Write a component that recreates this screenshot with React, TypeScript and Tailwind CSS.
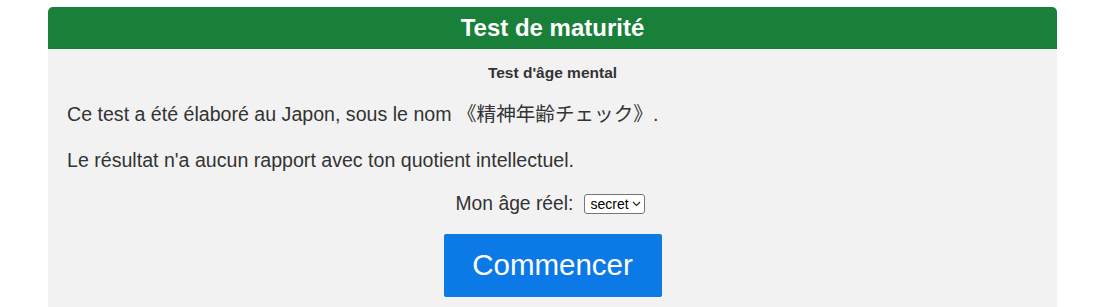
import React from "react";

export default function App() {
  return (
    <div className="w-[1100px] h-[307px] bg-white overflow-hidden pt-[7px]" style={{ fontFamily: '"Liberation Sans", Arial, "Noto Sans CJK JP", sans-serif' }}>
      <div className="ml-[48px] w-[1009px]">
        <div className="h-[42px] bg-[#19803a] rounded-t-[5px] flex items-center justify-center">
          <h1 className="text-white font-bold text-[24px] leading-[28px]">Test de maturité</h1>
        </div>
        <div className="bg-[#f2f2f2] h-[260px] pt-[14px] px-[20px] text-[#333]">
          <div className="text-center font-bold text-[15.5px] leading-[20px]">Test d'âge mental</div>
          <p className="text-[19.6px] leading-[22px] mt-[20px] -ml-[1px]">Ce test a été élaboré au Japon, sous le nom 《精神年齢チェック》.</p>
          <p className="text-[19.6px] leading-[22px] mt-[24px] -ml-[1px]">Le résultat n'a aucun rapport avec ton quotient intellectuel.</p>
          <div className="flex items-center justify-center gap-[11px] mt-[22px] text-[19.3px] leading-[22px] pr-[4px]">
            <span>Mon âge réel:</span>
            <div className="relative">
              <select className="appearance-none block text-[14px] leading-[17px] h-[20px] w-[61px] border border-[#767676] rounded-[3px] bg-white text-black pl-[5px] pr-[14px]" defaultValue="secret">
                <option>secret</option>
              </select>
              <svg className="absolute right-[4px] top-[7px] pointer-events-none" width="9" height="6" viewBox="0 0 9 6" fill="none">
                <path d="M1 1l3.5 3.5L8 1" stroke="#222" strokeWidth="1.1" />
              </svg>
            </div>
          </div>
          <div className="flex justify-center mt-[19px]">
            <button className="w-[218px] h-[63px] bg-[#0b7ae6] text-white text-[29.5px] rounded-[2px]">Commencer</button>
          </div>
        </div>
      </div>
    </div>
  );
}
